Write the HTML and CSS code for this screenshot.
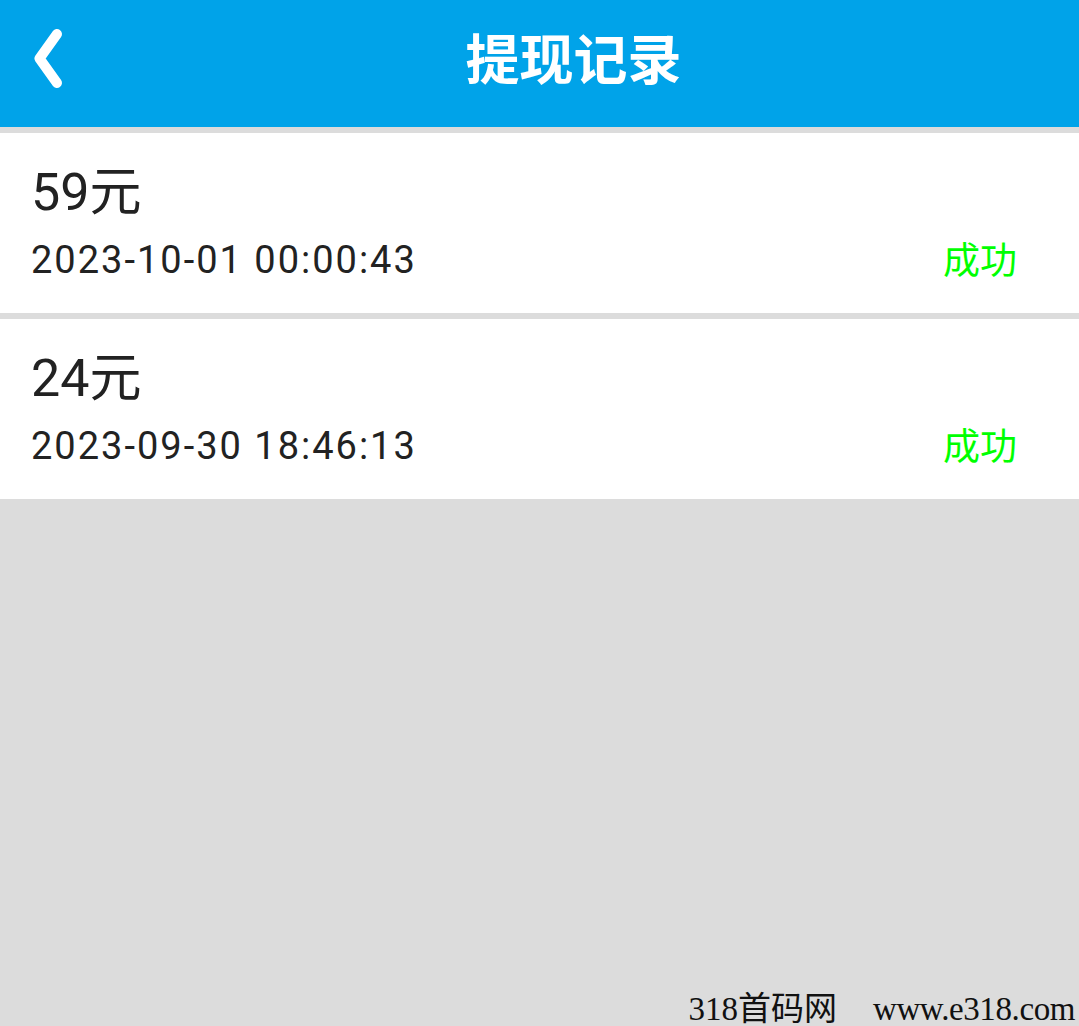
FILE: index.html
```html
<!DOCTYPE html>
<html lang="zh-CN">
<head>
<meta charset="utf-8">
<title>提现记录</title>
<link rel="stylesheet" href="styles.css">
</head>
<body>
<div class="page">
  <header class="topbar">
    <a class="back" href="#" aria-label="返回">
      <svg width="68" height="127" viewBox="0 0 68 127" aria-hidden="true">
        <path d="M57 34 L39.5 58.5 L57 83" fill="none" stroke="#fff" stroke-width="10" stroke-linecap="round" stroke-linejoin="round"/>
      </svg>
    </a>
    <h1 class="title">提现记录</h1>
  </header>
  <main class="list">
    <div class="record">
      <div class="amount">59元</div>
      <div class="meta">
        <span class="time">2023-10-01 00:00:43</span>
        <span class="status">成功</span>
      </div>
    </div>
    <div class="record">
      <div class="amount">24元</div>
      <div class="meta">
        <span class="time">2023-09-30 18:46:13</span>
        <span class="status">成功</span>
      </div>
    </div>
  </main>
  <div class="watermark">318首码网<span class="wm-url">www.e318.com</span></div>
</div>
</body>
</html>
```
FILE: styles.css
```css
html, body {
  margin: 0;
  padding: 0;
  height: 100%;
}
body {
  background: #dcdcdc;
  font-family: Roboto, "Noto Sans CJK SC", sans-serif;
  color: #222;
}
.page {
  position: relative;
  min-height: 1026px;
}
.topbar {
  height: 127px;
  background: #00a3e9;
  display: flex;
  align-items: center;
}
.back {
  width: 68px;
  height: 127px;
  display: block;
  flex: none;
}
.back svg {
  display: block;
}
.title {
  flex: 1;
  margin: 0;
  text-align: center;
  color: #fff;
  font-family: "Noto Sans CJK SC", sans-serif;
  font-weight: 700;
  font-size: 54px;
  line-height: 1;
  margin-top: -14px;
}
.list {
  padding-top: 6px;
  display: flex;
  flex-direction: column;
  gap: 6px;
}
.record {
  background: #fff;
  height: 180px;
  box-sizing: border-box;
  padding: 32px 62px 0 31px;
}
.amount {
  font-size: 52px;
  line-height: 56px;
}
.meta {
  display: flex;
  justify-content: space-between;
  align-items: center;
  margin-top: 14px;
}
.time {
  font-size: 38px;
  line-height: 50px;
  letter-spacing: 2px;
}
.status {
  color: #00ff00;
  font-family: "Noto Sans CJK SC", sans-serif;
  font-size: 37px;
  line-height: 50px;
  margin-top: -4px;
}
.watermark {
  position: absolute;
  right: 4px;
  bottom: -4px;
  font-family: "Liberation Serif", "Noto Sans CJK SC", serif;
  font-size: 33px;
  color: #111;
  white-space: nowrap;
}
.wm-url {
  margin-left: 36px;
  letter-spacing: -0.4px;
}
```
